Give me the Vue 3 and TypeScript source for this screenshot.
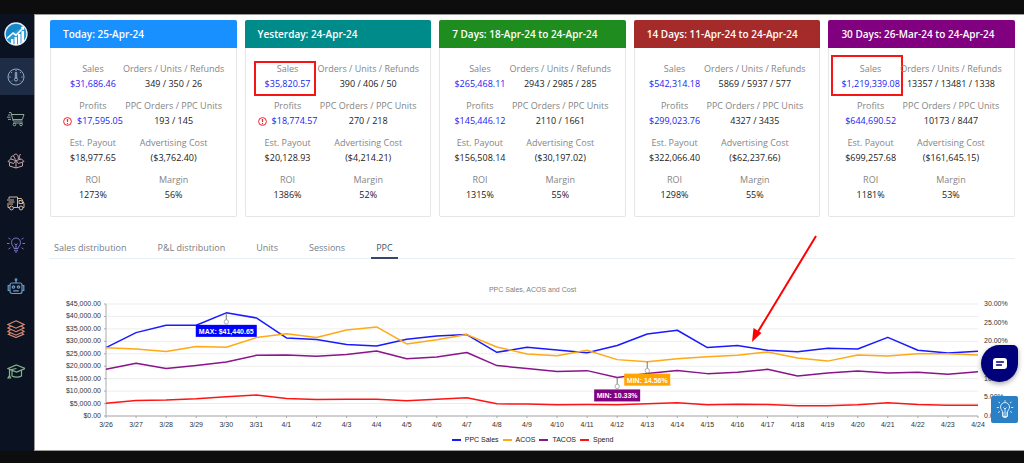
<script setup lang="ts">
interface Metric {
  label: string
  value: string
  link?: boolean
  warn?: boolean
  mark?: string
}
interface Card {
  title: string
  tone: string
  metrics: Metric[]
}

function makeCard(title: string, tone: string, values: string[], warn = false, mark = ''): Card {
  const labels = [
    'Sales', 'Orders / Units / Refunds',
    'Profits', 'PPC Orders / PPC Units',
    'Est. Payout', 'Advertising Cost',
    'ROI', 'Margin',
  ]
  return {
    title,
    tone,
    metrics: labels.map((label, i) => ({
      label,
      value: values[i],
      link: i === 0 || i === 2,
      warn: warn && i === 2,
      mark: i === 0 ? mark : '',
    })),
  }
}

const cards: Card[] = [
  makeCard('Today: 25-Apr-24', 'blue', ['$31,686.46', '349 / 350 / 26', '$17,595.05', '193 / 145', '$18,977.65', '($3,762.40)', '1273%', '56%'], true),
  makeCard('Yesterday: 24-Apr-24', 'teal', ['$35,820.57', '390 / 406 / 50', '$18,774.57', '270 / 218', '$20,128.93', '($4,214.21)', '1386%', '52%'], true, 'mark'),
  makeCard('7 Days: 18-Apr-24 to 24-Apr-24', 'green', ['$265,468.11', '2943 / 2985 / 285', '$145,446.12', '2110 / 1661', '$156,508.14', '($30,197.02)', '1315%', '55%']),
  makeCard('14 Days: 11-Apr-24 to 24-Apr-24', 'brown', ['$542,314.18', '5869 / 5937 / 577', '$299,023.76', '4327 / 3435', '$322,066.40', '($62,237.66)', '1298%', '55%']),
  makeCard('30 Days: 26-Mar-24 to 24-Apr-24', 'purple', ['$1,219,339.08', '13357 / 13481 / 1338', '$644,690.52', '10173 / 8447', '$699,257.68', '($161,645.15)', '1181%', '53%'], false, 'mark tall'),
]

const tabs = ['Sales distribution', 'P&L distribution', 'Units', 'Sessions', 'PPC']
const activeTab = 'PPC'

const left = 56
const right = 928
const top = 8
const bottom = 120
const days = Array.from({ length: 30 }, (_, i) => (i < 6 ? `3/${26 + i}` : `4/${i - 5}`))
const xAt = (i: number) => left + ((right - left) * i) / 29
const yAt = (v: number, max: number) => bottom - ((bottom - top) * v) / max

const dollars = Array.from({ length: 10 }, (_, i) => i * 5000)
const percents = [0, 5, 10, 15, 20, 25, 30]
const money = (v: number) => '$' + v.toLocaleString('en-US', { minimumFractionDigits: 2 })

const series = [
  {
    name: 'PPC Sales', color: '#1a1aff', max: 45000,
    data: [27500, 33500, 36450, 36450, 41440, 39400, 31350, 30700, 28700, 28100, 30800, 32150, 32700, 25600, 27600, 26500, 25450, 28300, 32950, 34450, 27500, 28300, 26400, 25850, 27200, 26900, 31600, 26400, 25300, 26000],
  },
  {
    name: 'ACOS', color: '#ffa914', max: 30,
    data: [18.3, 17.95, 17.25, 18.6, 18.4, 21, 22, 21, 23.05, 23.85, 19.3, 20.45, 21.8, 18.5, 16.6, 16.15, 17.6, 15.1, 14.56, 15.35, 15.9, 16.25, 17.15, 15.55, 14.7, 16.35, 16.05, 16.7, 16.7, 16.35],
  },
  {
    name: 'TACOS', color: '#8a148a', max: 30,
    data: [12.5, 14.1, 12.75, 13.55, 14.45, 16.25, 16.35, 16, 16.5, 17.4, 15.35, 15.8, 17, 13.5, 12.75, 11.95, 12.15, 10.33, 11.4, 12.2, 11.35, 11.7, 12.5, 10.7, 11.5, 12.05, 11.5, 11.7, 11.2, 11.85],
  },
  {
    name: 'Spend', color: '#ff1414', max: 45000,
    data: [5150, 6250, 6400, 6900, 7700, 8400, 7050, 6650, 6750, 6750, 6100, 6750, 7300, 4900, 4800, 4500, 4600, 4500, 4900, 5300, 4500, 4750, 4650, 4100, 4100, 4500, 5300, 4650, 4350, 4350],
  },
]
const points = (data: number[], max: number) => data.map((v, i) => `${xAt(i)},${yAt(v, max)}`).join(' ')

const flags = [
  { x: xAt(4), y: yAt(41440, 45000), width: 61, text: 'MAX: $41,440.65', color: '#0000ff' },
  { x: xAt(18), y: yAt(14.56, 30), width: 46, text: 'MIN: 14.56%', color: '#ffa500' },
  { x: xAt(17), y: yAt(10.33, 30), width: 46, text: 'MIN: 10.33%', color: '#800080' },
]
</script>

<template>
  <div class="page">
    <div class="strip top"></div>
    <div class="shell">
      <nav class="side" aria-label="Main">
        <a class="logo" href="#" aria-label="Home">
          <svg width="24" height="24" viewBox="0 0 24 24">
            <circle cx="12" cy="12" r="11" fill="#1687c9" stroke="#e4eef5" stroke-width="1.4" />
            <path d="M1.8 15Q6 14 9 11T20 5Q23 10 21.500 15Q19 22 12 22.300Q4 22 1.800 15Z" fill="#2a9bd8" />
            <path d="M7 17h2.400v5H7zM10.500 15h2.500v8h-2.500zM14 12h2.500v10.500H14zM17.500 9H20v11l-2.500 1.600z" fill="#fff" />
            <path d="M3 16.500l6-5.500 3 2.200L19.500 5.500" fill="none" stroke="#fff" stroke-width="1.600" />
            <path d="M16.500 5l4-.8-.6 4z" fill="#fff" />
          </svg>
        </a>
        <a class="item active" href="#" aria-label="Dashboard">
          <svg width="18" height="18" viewBox="0 0 18 18" stroke="#8fa9cb">
            <circle cx="9" cy="9" r="8" />
            <path d="M8.300 4.500h1.400V10H8.300zM9 2v1.200M4 4l.9.9M14 4l-.9.9M2.200 9h1.400M14.400 9h1.400M4 13.500l.8-.8M14 13.500l-.8-.8" />
            <circle cx="9" cy="11.500" r="1.600" />
          </svg>
        </a>
        <a class="item" href="#" aria-label="Orders">
          <svg width="18" height="18" viewBox="0 0 18 18" stroke="#8fa596">
            <path d="M2 2.500h2l2.200 8.500h9.300M4.600 4.500H17l-1.700 5H5.900M1 5h2.500M0 7.200h3.500M1 9.400h3M6 13h10" />
            <circle cx="7.500" cy="14.500" r="1.300" /><circle cx="14" cy="14.500" r="1.300" />
          </svg>
        </a>
        <a class="item" href="#" aria-label="Products">
          <svg width="18" height="18" viewBox="0 0 18 18" stroke="#c5a5a5">
            <path d="M9 8.500L3.500 7 1 9.500l5.500 2L9 8.500l2.500 3 5.500-2L14.500 7 9 8.500v7.500M2.500 10.500V14L9 16l6.500-2v-3.500M4 7C3.500 4.500 5 3.500 6.500 4c.5-2.500 4-2.500 4.500 0l.5 3M6.500 4l2 3.500M13 7c-1-2-.5-3.500.5-5" />
          </svg>
        </a>
        <a class="item" href="#" aria-label="Shipments">
          <svg width="18" height="18" viewBox="0 0 18 18" stroke="#d2b79c">
            <path d="M2 5V3h8.500v10.500H6.500M2.500 13.500H1V11M10.500 4.500h4l2.500 5v4h-1M12 6.500h2.500L16 9.500h-4zM0 6h7M1.500 8h6M0 10h6M10.500 13.500h2" />
            <circle cx="4.500" cy="14" r="1.900" /><circle cx="14" cy="14" r="1.900" />
          </svg>
        </a>
        <a class="item" href="#" aria-label="Ideas">
          <svg width="18" height="18" viewBox="0 0 18 18" stroke="#7e74ca">
            <path d="M7 12.500c0-2-2.500-2.800-2.500-6C4.500 4 6.500 2 9 2s4.500 2 4.500 4.500c0 3.200-2.500 4-2.500 6zM7 14.300h4M7.800 16h2.400M7.500 7.500L9 9l1.500-1.500M9 9v3.500M0 7.500h2.500M15.500 7.500H18M1.500 2l2 1.300M16.500 2l-2 1.300M1.500 13l2-1.300M16.500 13l-2-1.300" />
          </svg>
        </a>
        <a class="item" href="#" aria-label="Automation">
          <svg width="18" height="18" viewBox="0 0 18 18" stroke="#6c9bc4" stroke-width="1.200">
            <rect x="3" y="5" width="12" height="10.500" rx="2" />
            <path d="M9 5V2M2.800 7.500H1.200v5h1.600M15.200 7.500h1.600v5h-1.600M6 13h6M8 13v-1M10 13v-1" />
            <circle cx="9" cy="1.700" r=".8" /><circle cx="6.500" cy="9" r="1.200" /><circle cx="11.500" cy="9" r="1.200" />
          </svg>
        </a>
        <a class="item" href="#" aria-label="Layers">
          <svg width="18" height="18" viewBox="0 0 18 18" stroke="#d98a70" stroke-width="1.200">
            <path d="M9 .8l8 3.700-8 3.700-8-3.700zM3.500 6.200L1 8l8 3.700L17 8l-2.500-1.800M3.500 9.800L1 11.500l8 3.700 8-3.700-2.500-1.700M3 13.200l-1.500 1.100L9 17.500l7.500-3.200-1.500-1.100" />
          </svg>
        </a>
        <a class="item" href="#" aria-label="Learning">
          <svg width="18" height="18" viewBox="0 0 18 18" stroke="#86b38d" stroke-width="1.200">
            <path d="M9.500 3L18 6.500 9.500 10 1 6.500zM5 8.500v5.500c2.500 1.500 7 1.500 9.500 0V8.500M9.500 6.500L2.500 8v5.500M2.500 13.500l-1.500 2.500h2.500z" />
          </svg>
        </a>
      </nav>

      <main class="content">
        <section class="cards">
          <article v-for="card in cards" :key="card.title" class="card">
            <h2 :class="card.tone">{{ card.title }}</h2>
            <dl>
              <div v-for="m in card.metrics" :key="m.label" class="metric" :class="m.mark">
                <dt>{{ m.label }}</dt>
                <dd>
                  <svg v-if="m.warn" class="warn" width="9" height="9" viewBox="0 0 9 9" aria-label="Warning">
                    <circle cx="4.500" cy="4.500" r="3.900" fill="none" stroke="#f5222d" />
                    <path d="M4.500 2v3M4.500 6v1.200" stroke="#f5222d" stroke-width="1.200" />
                  </svg>
                  <a v-if="m.link" href="#">{{ m.value }}</a>
                  <template v-else>{{ m.value }}</template>
                </dd>
              </div>
            </dl>
          </article>
        </section>

        <div class="tabs" role="tablist">
          <button v-for="t in tabs" :key="t" type="button" role="tab" :aria-selected="t === activeTab" :class="{ on: t === activeTab }">{{ t }}</button>
        </div>

        <section class="chart">
          <h3>PPC Sales, ACOS and Cost</h3>
          <svg class="plot" viewBox="0 0 965 138">
            <g class="grid">
              <line v-for="d in dollars" :key="d" :x1="left" :x2="right" :y1="yAt(d, 45000)" :y2="yAt(d, 45000)" />
            </g>
            <g class="axis">
              <line :x1="left" :x2="left" :y1="top" :y2="bottom" />
              <line :x1="left" :x2="right" :y1="bottom" :y2="bottom" />
              <line v-for="d in dollars" :key="d" :x1="left - 2" :x2="left" :y1="yAt(d, 45000)" :y2="yAt(d, 45000)" />
              <line v-for="(d, i) in days" :key="d" :x1="xAt(i)" :x2="xAt(i)" :y1="bottom" :y2="bottom + 2" />
            </g>
            <g class="labels">
              <text v-for="d in dollars" :key="d" :x="left - 5" :y="yAt(d, 45000) + 2" text-anchor="end">{{ money(d) }}</text>
              <text v-for="p in percents" :key="p" :x="right + 6" :y="yAt(p, 30) + 2">{{ p.toFixed(2) }}%</text>
              <text v-for="(d, i) in days" :key="d" :x="xAt(i)" :y="bottom + 11" text-anchor="middle">{{ d }}</text>
            </g>
            <polyline v-for="s in series" :key="s.name" :points="points(s.data, s.max)" fill="none" :stroke="s.color" stroke-width="1.500" stroke-linejoin="round" />
            <g v-for="f in flags" :key="f.text">
              <line :x1="f.x" :x2="f.x" :y1="f.y" :y2="f.y + 7" stroke="#777" />
              <circle :cx="f.x" :cy="f.y + 9" r="2.200" fill="#fff" stroke="#999" stroke-width=".8" />
              <rect :x="f.x - f.width / 2" :y="f.y + 12" :width="f.width" height="12" :fill="f.color" />
              <text class="flag" :x="f.x" :y="f.y + 21" text-anchor="middle">{{ f.text }}</text>
            </g>
            <path d="M766-60L706 39" stroke="#f00" stroke-width="2" />
            <path d="M702 46l1.500-14 8 5z" fill="#f00" />
          </svg>
          <ul class="legend">
            <li v-for="s in series" :key="s.name">
              <svg width="9" height="2" viewBox="0 0 9 2"><path d="M0 1h9" :stroke="s.color" stroke-width="2" /></svg>{{ s.name }}
            </li>
          </ul>
        </section>

        <button class="chat" type="button" aria-label="Open chat">
          <svg width="16" height="14" viewBox="0 0 16 14">
            <path d="M4 1h8a3 3 0 0 1 3 3v5a3 3 0 0 1-3 3H1V4a3 3 0 0 1 3-3z" fill="#fff" />
            <path d="M4.500 5h7M4.500 8h5" stroke="#00007a" stroke-width="1.300" stroke-linecap="round" />
          </svg>
        </button>
        <button class="idea" type="button" aria-label="Tips">
          <svg width="18" height="19" viewBox="0 0 18 19" fill="none" stroke="#d9ecfa">
            <path d="M6.500 12c0-1.500-2-2.500-2-5a4.500 4.500 0 0 1 9 0c0 2.500-2 3.500-2 5v4.500h-5zM6.500 13h5M6.500 15h5M7.500 17.500h3M9 8v4M7.500 7.500L9 9l1.500-1.500M9 .2v1.600M2.500 2l1.500 1M15.500 2L14 3M.8 7.500h2M17.200 7.500h-2M2 12.500l1.800-1M16 12.500l-1.800-1" />
          </svg>
        </button>
      </main>
    </div>
    <div class="strip bottom"></div>
  </div>
</template>

<style>
body {
  margin: 0;
  background: #fff;
}
</style>

<style scoped>
.page {
  display: flex;
  flex-direction: column;
  min-height: 100vh;
  font-family: "Open Sans", "Noto Sans", sans-serif;
  font-size: 9px;
  color: #222;
}
.strip {
  background: #0d0d0d;
  flex: none;
}
.top {
  height: 14px;
}
.bottom {
  height: 12px;
}
.shell {
  flex: 1;
  display: flex;
}
.side {
  width: 34px;
  flex: none;
  background: #0b1322;
  display: flex;
  flex-direction: column;
  gap: 5px;
}
.logo,
.item {
  display: flex;
  justify-content: center;
  align-items: center;
  height: 37px;
  padding-right: 2px;
}
.logo {
  height: 39px;
}
.item.active {
  background: #1f2c45;
}
.item svg {
  fill: none;
}
.content {
  position: relative;
  flex: 1;
  min-width: 0;
  border: solid #999;
  border-width: 1px 0 1px 1px;
  padding: 5px 9px 4px 15px;
}
.cards {
  display: grid;
  grid-template-columns: repeat(5, minmax(0, 1fr));
  gap: 8px;
}
.card {
  border: 1px solid #e6e6e6;
  border-top: 0;
  border-radius: 2px;
}
h2 {
  margin: 0 -1px;
  padding: 0 13px;
  border-radius: 2px 2px 0 0;
  font-size: 10px;
  line-height: 28px;
  font-weight: 600;
  color: #fff;
  white-space: nowrap;
}
.blue {
  background: #1890ff;
}
.teal {
  background: #008b8b;
}
.green {
  background: #1e8c1e;
}
.brown {
  background: #a52a2a;
}
.purple {
  background: #800080;
}
dl {
  margin: 0;
  padding: 13px 12px 13px;
  display: grid;
  grid-template-columns: 56fr 106fr;
  row-gap: 6px;
}
.metric {
  position: relative;
  display: flex;
  flex-direction: column;
  align-items: center;
  white-space: nowrap;
}
dt {
  line-height: 15px;
  color: #858585;
}
dd {
  margin: 0;
  line-height: 16px;
  font-weight: 500;
  display: flex;
  align-items: center;
}
dd a {
  color: #1a1af5;
  text-decoration: none;
}
.warn {
  margin-right: 5px;
}
.mark::after {
  content: "";
  position: absolute;
  inset: 0 1px -4px -4px;
  border: 2px solid #f81414;
}
.mark.tall::after {
  inset: -6px -3px -4px -10px;
}
.tabs {
  display: flex;
  gap: 21px;
  margin: 22px 0 0 -1px;
  border-bottom: 1px solid #e8eff5;
}
.tabs button {
  margin-bottom: -1px;
  padding: 0 5px;
  border: 0;
  border-bottom: 2px solid transparent;
  background: none;
  font: inherit;
  line-height: 18px;
  color: #74808a;
}
.tabs .on {
  color: #44546a;
  border-color: #33486b;
}
.chart {
  margin-top: 25px;
  font-family: "Liberation Sans", Arial, sans-serif;
  font-size: 7px;
}
h3 {
  margin: 0;
  font-size: 7px;
  line-height: 12px;
  font-weight: 400;
  text-align: center;
  color: #808080;
}
.plot {
  display: block;
  width: 100%;
  overflow: visible;
}
.grid line {
  stroke: #ededed;
}
.axis line {
  stroke: #aaa;
}
.labels text {
  font-size: 7px;
  fill: #333;
}
.flag {
  font-size: 7px;
  font-weight: 700;
  fill: #fff;
}
.legend {
  display: flex;
  justify-content: center;
  gap: 4px;
  margin: 1px 0 0;
  padding: 0;
  list-style: none;
  line-height: 10px;
}
.legend li {
  display: flex;
  align-items: center;
  gap: 4px;
}
.chat,
.idea {
  position: absolute;
  right: 6px;
  display: flex;
  justify-content: center;
  align-items: center;
  padding: 0;
  border: 0;
}
.chat {
  bottom: 68px;
  width: 37px;
  height: 37px;
  border-radius: 50% 5px 50% 50%;
  background: #00007a;
  box-shadow: 0 2px 5px rgba(0, 0, 0, 0.35);
}
.idea {
  bottom: 27px;
  width: 27px;
  height: 27px;
  border-radius: 2px;
  background: #2b80c5;
}
</style>
